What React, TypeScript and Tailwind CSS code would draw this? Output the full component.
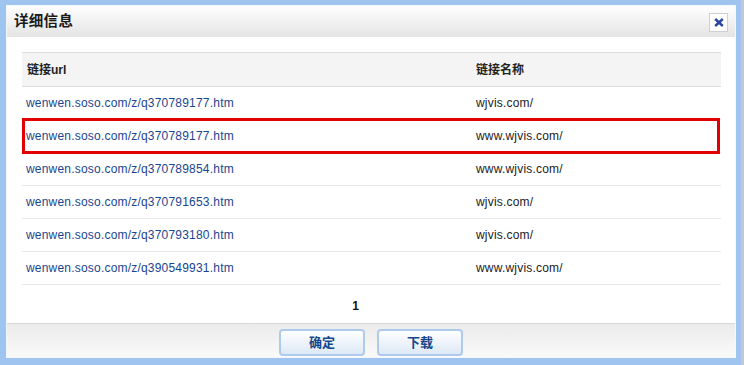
import React from 'react';

interface LinkRow {
  url: string;
  name: string;
}

const rows: LinkRow[] = [
  { url: 'wenwen.soso.com/z/q370789177.htm', name: 'wjvis.com/' },
  { url: 'wenwen.soso.com/z/q370789177.htm', name: 'www.wjvis.com/' },
  { url: 'wenwen.soso.com/z/q370789854.htm', name: 'www.wjvis.com/' },
  { url: 'wenwen.soso.com/z/q370791653.htm', name: 'wjvis.com/' },
  { url: 'wenwen.soso.com/z/q370793180.htm', name: 'wjvis.com/' },
  { url: 'wenwen.soso.com/z/q390549931.htm', name: 'www.wjvis.com/' },
];

const font = { fontFamily: '"Liberation Sans", "Noto Sans CJK SC", sans-serif' };

const App: React.FC = () => {
  return (
    <div className="w-[744px] h-[365px] bg-[#9ec4ef] flex overflow-hidden" style={font}>
      <div className="flex-1 pt-[5px] pl-[6px] pr-[5px] pb-[7px] flex">
        <div className="flex-1 flex flex-col bg-white border border-[#f4f8fc]">
          {/* Title bar */}
          <div className="h-[31px] flex items-center justify-between pl-[7px] pr-[7px] bg-gradient-to-b from-white to-[#e4e4e4]">
            <span className="text-[14.5px] font-bold text-[#1a1a1a] leading-none tracking-[0.3px] -mt-[1px]">详细信息</span>
            <button className="w-[19px] h-[19px] bg-white border border-[#cfcfcf] flex items-center justify-center mt-[2px]">
              <svg width="10" height="9" viewBox="0 0 10 9">
                <path d="M1.2 1 L8.8 8 M8.8 1 L1.2 8" stroke="#2b45a6" strokeWidth="2.4" strokeLinecap="butt" />
              </svg>
            </button>
          </div>

          {/* Body */}
          <div className="flex-1 pt-[15px] pl-[15px] pr-[14px] flex flex-col">
            <div className="relative">
              <div className="h-[35px] flex items-center bg-[#f4f4f4] border-t border-b border-[#dcdcdc] text-[12px] font-bold text-[#222]">
                <div className="w-[454px] pl-[5px]">链接url</div>
                <div className="flex-1">链接名称</div>
              </div>
              {rows.map((r, i) => (
                <div key={i} className="h-[33px] flex items-center border-b border-[#e8e8e8] text-[12px] tracking-[0.2px]">
                  <a className="w-[454px] pl-[4px] text-[#1a458f]">{r.url}</a>
                  <div className="flex-1 text-[#222]">{r.name}</div>
                </div>
              ))}
              {/* highlight annotation */}
              <div className="absolute left-0 top-[66px] w-[698px] h-[36px] border-[3px] border-[#e40000] pointer-events-none" />
            </div>
            <div className="flex-1 flex items-center justify-center pr-[32px] pt-[3px]">
              <span className="text-[12px] font-bold text-[#111]">1</span>
            </div>
          </div>

          {/* Footer */}
          <div className="h-[34px] border-t border-[#d9d9d9] bg-gradient-to-b from-[#ebebeb] to-[#fafafa] flex items-start justify-center gap-[12px] pt-[5px]">
            {['确定', '下载'].map((t) => (
              <button
                key={t}
                className="w-[86px] h-[27px] rounded-[4px] border-2 border-[#aecbeb] bg-gradient-to-b from-white to-[#dde9f6] text-[13px] font-bold text-[#17468a] flex items-center justify-center"
              >
                {t}
              </button>
            ))}
          </div>
        </div>
      </div>
      <div className="w-[3px] bg-[#c2c9d1]" />
    </div>
  );
};

export default App;
